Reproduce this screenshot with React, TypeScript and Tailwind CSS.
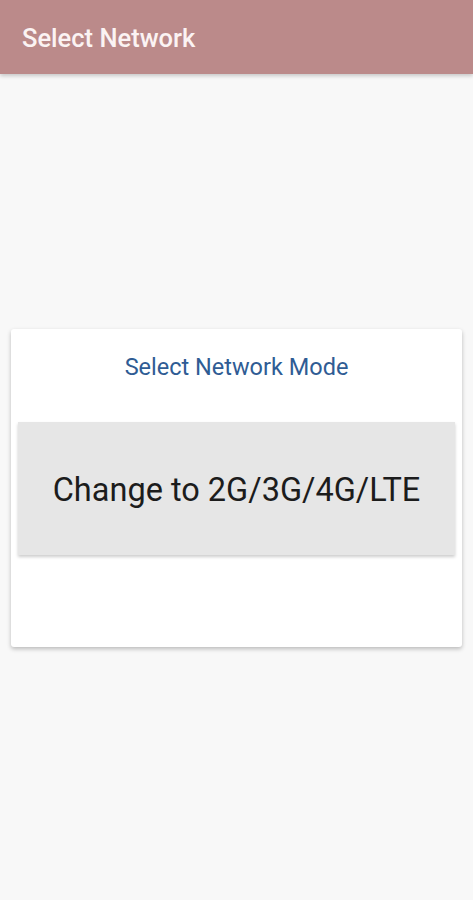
import React from 'react';

export default function App() {
  return (
    <div className="min-h-[900px] w-full bg-[#f8f8f8]" style={{ fontFamily: 'Roboto, "Noto Sans", sans-serif' }}>
      <header className="h-[74px] bg-[#bb8a8a] px-[22px] flex items-center shadow-[0_2px_4px_rgba(0,0,0,0.2)]">
        <h1 className="text-[25.5px] font-medium text-[#fbf3f3] leading-none pt-[4px]">Select Network</h1>
      </header>

      <main className="px-[11px] pt-[255px]">
        <div className="bg-white rounded-[3px] shadow-[0_2px_4px_rgba(0,0,0,0.25)] pt-[24px] pb-[92px]">
          <p className="text-center text-[23.5px] leading-[28px] text-[#2f5c94]">Select Network Mode</p>
          <button className="mt-[41px] mx-[7px] w-[calc(100%-14px)] h-[133px] bg-[#e6e6e6] shadow-[0_2px_3px_rgba(0,0,0,0.2)] flex items-center justify-center">
            <span className="text-[32.5px] text-[#1c1c1c] pt-[3px]">Change to 2G/3G/4G/LTE</span>
          </button>
        </div>
      </main>
    </div>
  );
}
